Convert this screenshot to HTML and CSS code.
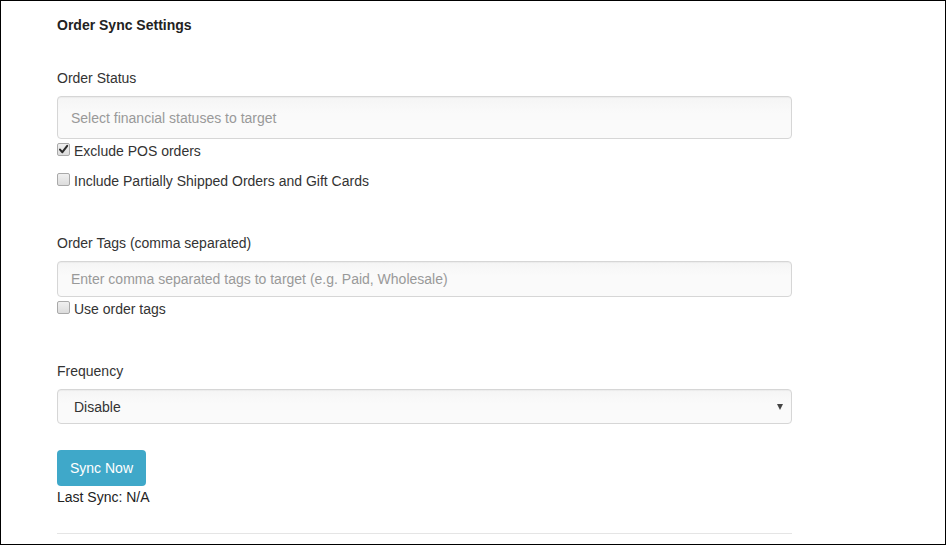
FILE: index.html
```html
<!DOCTYPE html>
<html>
<head>
<meta charset="utf-8">
<link rel="stylesheet" href="styles.css">
</head>
<body>
<div class="frame">
  <div class="content">
    <h3 class="title">Order Sync Settings</h3>

    <div class="group group-first">
      <label class="label">Order Status</label>
      <div class="input input-tall"><span class="placeholder">Select financial statuses to target</span></div>
      <div class="check">
        <span class="box checked"><svg width="11" height="11" viewBox="0 0 11 11"><path d="M2 5.6 L4.4 8.2 L9.2 1.8" fill="none" stroke="#2b2b2b" stroke-width="2" stroke-linecap="round" stroke-linejoin="round"/></svg></span>
        <span class="check-text">Exclude POS orders</span>
      </div>
      <div class="check check-gap">
        <span class="box"></span>
        <span class="check-text">Include Partially Shipped Orders and Gift Cards</span>
      </div>
    </div>

    <div class="group">
      <label class="label">Order Tags (comma separated)</label>
      <div class="input"><span class="placeholder">Enter comma separated tags to target (e.g. Paid, Wholesale)</span></div>
      <div class="check">
        <span class="box"></span>
        <span class="check-text">Use order tags</span>
      </div>
    </div>

    <div class="group">
      <label class="label">Frequency</label>
      <div class="input select"><span class="select-value">Disable</span><span class="caret"></span></div>
    </div>

    <button class="btn">Sync Now</button>
    <div class="last-sync">Last Sync: N/A</div>
    <hr class="sep">
  </div>
</div>
</body>
</html>
```
FILE: styles.css
```css
* { box-sizing: border-box; }
html, body { margin: 0; padding: 0; background: #fff; }
body {
  font-family: "Liberation Sans", Arial, Helvetica, sans-serif;
  font-size: 14px;
  line-height: 20px;
  color: #333;
}
.frame {
  width: 946px;
  height: 545px;
  border: 1px solid #000;
  overflow: hidden;
}
.content {
  width: 792px;
  padding: 14px 0 0 56px;
}
.title {
  margin: 0;
  font-size: 14px;
  font-weight: bold;
  line-height: 20px;
  color: #222;
}
.group { margin-top: 42px; }
.group-first { margin-top: 33px; }
.label { display: block; line-height: 20px; margin-bottom: 8px; }
.input {
  width: 735px;
  height: 36px;
  border: 1px solid #d6d6d6;
  border-radius: 4px;
  background: linear-gradient(#f5f5f5, #fafafa 40%, #fafafa);
  box-shadow: inset 0 1px 1px rgba(0,0,0,0.04);
  display: flex;
  align-items: center;
  padding: 0 13px;
}
.input-tall { height: 43px; }
.placeholder { color: #999; }
.check {
  display: flex;
  align-items: center;
  margin-top: 2px;
  height: 20px;
}
.check-gap { margin-top: 10px; }
.box {
  width: 13px;
  height: 13px;
  border: 1px solid #a9a9a9;
  border-radius: 2px;
  background: linear-gradient(#f0f0f0, #dcdcdc);
  display: flex;
  align-items: center;
  justify-content: center;
  margin-right: 4px;
  margin-top: -3px;
}
.box svg { display: block; }
.check-text { color: #333; }
.select {
  height: 35px;
  justify-content: space-between;
  padding: 0 8px 0 16px;
}
.select-value { color: #333; }
.caret {
  width: 0; height: 0;
  border-left: 3.5px solid transparent;
  border-right: 3.5px solid transparent;
  border-top: 6px solid #444;
  margin-top: 1px;
}
.btn {
  display: block;
  margin-top: 26px;
  width: 89px;
  height: 36px;
  background: #3fa8c9;
  color: #fff;
  border: none;
  border-radius: 4px;
  font-family: "Liberation Sans", Arial, Helvetica, sans-serif;
  font-size: 14px;
  padding: 0;
}
.last-sync { margin-top: 1px; line-height: 20px; color: #222; }
.sep {
  margin: 26px 0 0 0;
  width: 735px;
  border: 0;
  border-top: 1px solid #e5e5e5;
}
```
